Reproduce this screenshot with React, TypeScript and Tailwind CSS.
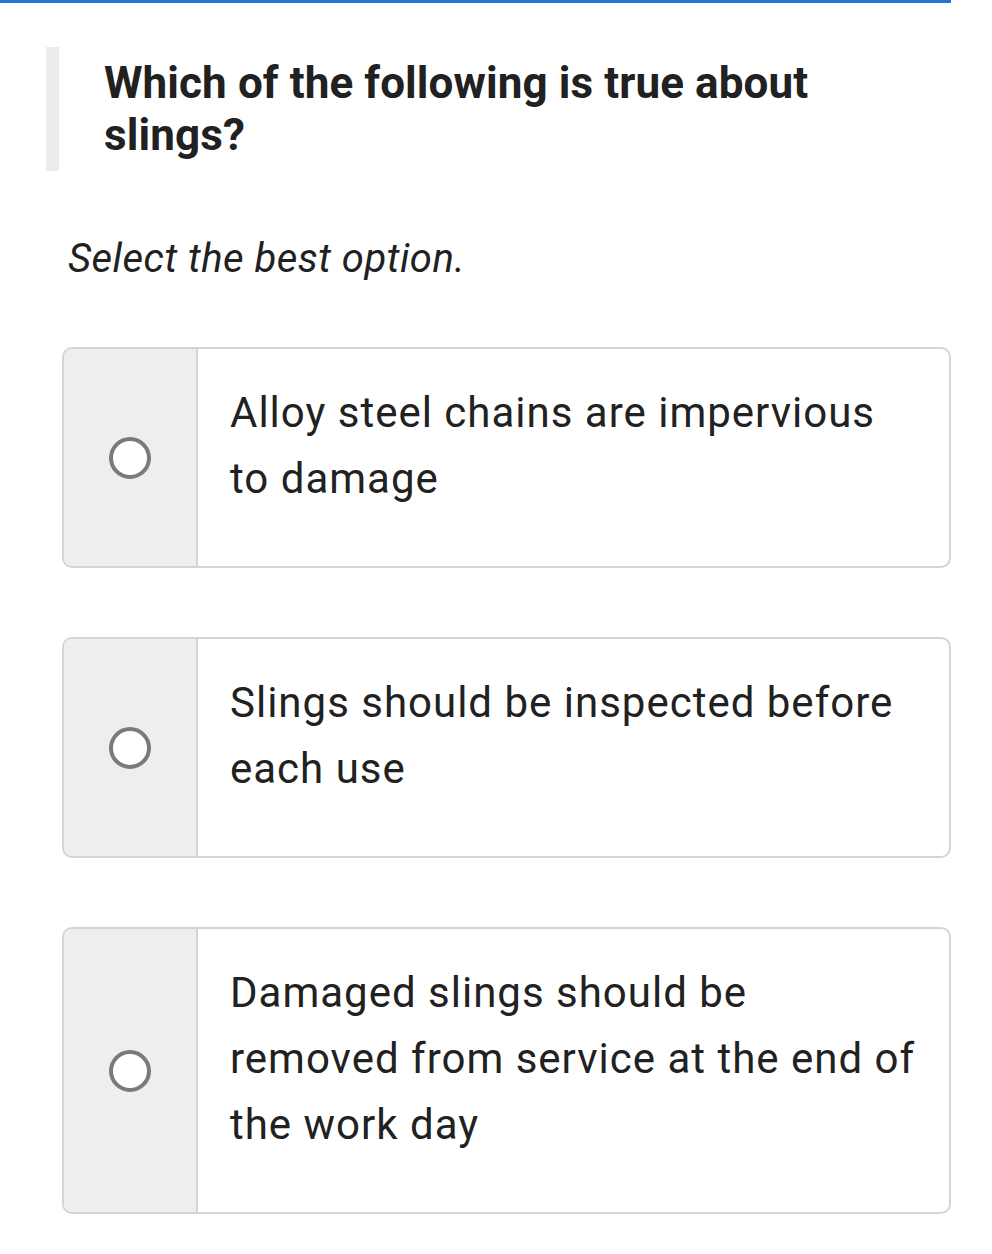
import React from "react";

// Each option is kept as its displayed lines so the wrapping stays fixed.
const options: string[][] = [
  ["Alloy steel chains are impervious", "to damage"],
  ["Slings should be inspected before", "each use"],
  ["Damaged slings should be", "removed from service at the end of", "the work day"],
];

function OptionCard({ lines }: { lines: string[] }) {
  return (
    <div className="flex rounded-[10px] border-2 border-[#d4d4d4] overflow-hidden bg-white">
      <div className="w-[134px] shrink-0 bg-[#eeeeee] border-r-2 border-[#d4d4d4] flex items-center justify-center">
        <span className="block w-[42px] h-[42px] rounded-full border-[4px] border-[#7a7a7a] bg-white" />
      </div>
      <div className="flex-1 pl-[32px] pr-[20px] pt-[31px] pb-[54px] text-[42px] leading-[66px] tracking-[1px] text-[#212121]">
        {lines.map((l) => (
          <span key={l} className="block whitespace-nowrap">
            {l}
          </span>
        ))}
      </div>
    </div>
  );
}

export default function App() {
  return (
    <div
      className="w-[992px] min-h-[1254px] bg-white"
      style={{ fontFamily: "Roboto, 'Noto Sans', Arial, sans-serif" }}
    >
      <div className="w-[951px] border-t-[3px] border-[#2a74d0]">
        <div className="pt-[44px] pl-[46px]">
          <div className="border-l-[13px] border-[#ececec] pl-[45px] pt-[10px] pb-[10px] pr-[100px]">
            <h1 className="text-[44px] leading-[52px] font-bold tracking-[0.1px] text-[#212121]">
              Which of the following is true about slings?
            </h1>
          </div>
        </div>
        <p className="pl-[68px] mt-[64px] text-[40px] italic tracking-[0.5px] text-[#212121] leading-[48px]">
          Select the best option.
        </p>
        <div className="ml-[62px] mt-[64px] flex flex-col gap-[69px]">
          {options.map((o) => (
            <OptionCard key={o[0]} lines={o} />
          ))}
        </div>
      </div>
    </div>
  );
}
